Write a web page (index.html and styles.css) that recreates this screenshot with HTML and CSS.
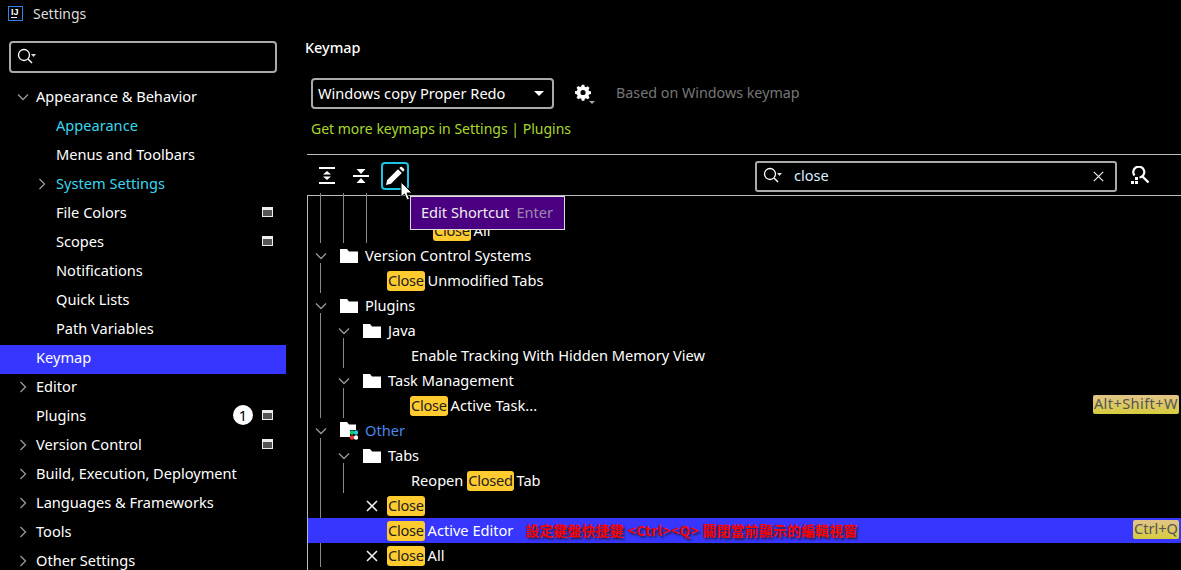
FILE: index.html
```html
<!doctype html>
<html lang="en">
<head>
    <meta charset="UTF-8">
    <title>Settings</title>
    <link rel="stylesheet" href="styles.css">
</head>
<body>
<div class="titlebar">
    <div class="app-logo"><span>IJ</span><i></i></div>
    <span class="app-name">Settings</span>
</div>
<div class="main">
    <div class="side">
        <div class="side-search">
            <svg class="search-ico" width="20" height="18" viewBox="0 0 20 18"><circle cx="7" cy="7" r="5.5" fill="none" stroke="#fff" stroke-width="1.3"/><path d="M11 11l4 4" stroke="#fff" stroke-width="1.5"/><path d="M14 6h5l-2.500 3z" fill="#ddd"/></svg>
        </div>
        <div class="nav">
            <div class="nav-item"><svg class="chev" viewBox="0 0 12 12"><path d="M1 3.500l5 5 5-5"/></svg><span>Appearance &amp; Behavior</span></div>
            <div class="nav-item sub cyan"><span>Appearance</span></div>
            <div class="nav-item sub"><span>Menus and Toolbars</span></div>
            <div class="nav-item sub cyan"><svg class="chev" viewBox="0 0 12 12"><path d="M3.500 1l5 5-5 5"/></svg><span>System Settings</span></div>
            <div class="nav-item sub"><span>File Colors</span><i class="win"></i></div>
            <div class="nav-item sub"><span>Scopes</span><i class="win"></i></div>
            <div class="nav-item sub"><span>Notifications</span></div>
            <div class="nav-item sub"><span>Quick Lists</span></div>
            <div class="nav-item sub"><span>Path Variables</span></div>
            <div class="nav-item active"><span>Keymap</span></div>
            <div class="nav-item"><svg class="chev" viewBox="0 0 12 12"><path d="M3.500 1l5 5-5 5"/></svg><span>Editor</span></div>
            <div class="nav-item"><span>Plugins</span><b class="count">1</b><i class="win"></i></div>
            <div class="nav-item"><svg class="chev" viewBox="0 0 12 12"><path d="M3.500 1l5 5-5 5"/></svg><span>Version Control</span><i class="win"></i></div>
            <div class="nav-item"><svg class="chev" viewBox="0 0 12 12"><path d="M3.500 1l5 5-5 5"/></svg><span>Build, Execution, Deployment</span></div>
            <div class="nav-item"><svg class="chev" viewBox="0 0 12 12"><path d="M3.500 1l5 5-5 5"/></svg><span>Languages &amp; Frameworks</span></div>
            <div class="nav-item"><svg class="chev" viewBox="0 0 12 12"><path d="M3.500 1l5 5-5 5"/></svg><span>Tools</span></div>
            <div class="nav-item"><svg class="chev" viewBox="0 0 12 12"><path d="M3.500 1l5 5-5 5"/></svg><span>Other Settings</span></div>
        </div>
    </div>

    <div class="content">
        <h1 class="heading">Keymap</h1>
        <div class="scheme">
            <div class="dropdown"><span class="lift">Windows copy Proper Redo</span><i class="arrow"></i></div>
            <svg class="gear" width="22" height="22" viewBox="0 0 22 22"><path fill="#fff" fill-rule="evenodd" d="M9 2h3l.5 2.300 1.500.7 2-1.300 2.100 2.100-1.300 2 .7 1.500 2.300.5v3l-2.300.5-.7 1.500 1.300 2-2.100 2.100-2-1.300-1.500.7-.5 2.300H9l-.5-2.300-1.500-.7-2 1.300-2.100-2.100 1.300-2-.7-1.500L1.200 12.500v-3l2.300-.5.7-1.500-1.300-2 2.100-2.100 2 1.300 1.500-.7zM10.500 8a3 3 0 1 0 0 6 3 3 0 0 0 0-6z" transform="scale(.86)"/><path d="M15 18h6l-3 3z" fill="#aaa"/></svg>
            <span class="based lift">Based on Windows keymap</span>
        </div>
        <div class="more">Get more keymaps in Settings | Plugins</div>

        <div class="table">
            <div class="toolbar">
                <div class="tool">
                    <svg width="18" height="18" viewBox="0 0 18 18"><path d="M1 0h16v2H1zM1 15h16v2H1z" fill="#fff"/><path d="M9 4l4 3.500H5zM9 13l4-3.500H5z" fill="#fff"/></svg>
                </div>
                <div class="tool">
                    <svg width="18" height="18" viewBox="0 0 18 18"><path d="M1 8h16v2H1z" fill="#fff"/><path d="M9 7L4.500 2h9zM9 11l4.500 5h-9z" fill="#fff"/></svg>
                </div>
                <div class="tool focused">
                    <svg width="20" height="20" viewBox="0 0 20 20"><path d="M1 19l1.200-5L13 3.200 16.800 7 6 17.800zM14.300 2l1.200-1.100a1 1 0 0 1 1.400 0l2.200 2.200a1 1 0 0 1 0 1.400L18 5.700z" fill="#fff"/></svg>
                </div>
                <div class="filter">
                    <svg class="search-ico" width="20" height="18" viewBox="0 0 20 18"><circle cx="7" cy="7" r="5.500" fill="none" stroke="#fff" stroke-width="1.300"/><path d="M11 11l4 4" stroke="#fff" stroke-width="1.500"/><path d="M14 6h5l-2.500 3z" fill="#ddd"/></svg>
                    <span class="filter-text lift">close</span>
                    <svg class="clear" width="11" height="11" viewBox="0 0 11 11"><path d="M.8.800l9.400 9.400M10.200.800L.8 10.200" stroke="#eee" stroke-width="1.200"/></svg>
                </div>
                <div class="tool find">
                    <svg width="20" height="20" viewBox="0 0 20 20"><path d="M4.500 9.500a5.500 5.500 0 1 1 5 2" fill="none" stroke="#fff" stroke-width="2.200"/><path d="M12.500 10.500l6 6" stroke="#fff" stroke-width="2.400"/><path d="M5 11h3v3H5zM1 15h3v3H1zM5 15h3v3H5z" fill="#fff"/></svg>
                </div>
            </div>
            <div class="tree">
                <div class="tree-list">
                    <div class="row"><i class="guide g1"></i><i class="guide g2"></i><i class="guide g3"></i></div>
                    <div class="row lv3"><i class="guide g1"></i><i class="guide g2"></i><i class="guide g3"></i><mark>Close</mark> All</div>
                    <div class="row lv0"><i class="guide g1 from"></i><svg class="chev" viewBox="0 0 12 12"><path d="M1 3.500l5 5 5-5"/></svg><svg class="folder" viewBox="0 0 18 14"><path d="M0 0h7l2 2.500h9V14H0z"/></svg>Version Control Systems</div>
                    <div class="row lv1"><i class="guide g1"></i><mark>Close</mark> Unmodified Tabs</div>
                    <div class="row lv0"><i class="guide g1 from"></i><svg class="chev" viewBox="0 0 12 12"><path d="M1 3.500l5 5 5-5"/></svg><svg class="folder" viewBox="0 0 18 14"><path d="M0 0h7l2 2.500h9V14H0z"/></svg>Plugins</div>
                    <div class="row lv2"><i class="guide g1"></i><i class="guide g2 from"></i><svg class="chev" viewBox="0 0 12 12"><path d="M1 3.500l5 5 5-5"/></svg><svg class="folder" viewBox="0 0 18 14"><path d="M0 0h7l2 2.500h9V14H0z"/></svg>Java</div>
                    <div class="row lv4"><i class="guide g1"></i><i class="guide g2"></i>Enable Tracking With Hidden Memory View</div>
                    <div class="row lv2"><i class="guide g1"></i><i class="guide g2 from"></i><svg class="chev" viewBox="0 0 12 12"><path d="M1 3.500l5 5 5-5"/></svg><svg class="folder" viewBox="0 0 18 14"><path d="M0 0h7l2 2.500h9V14H0z"/></svg>Task Management</div>
                    <div class="row lv4 tight"><i class="guide g1"></i><i class="guide g2"></i><mark>Close</mark> Active Task...<span class="keys">Alt+Shift+W</span></div>
                    <div class="row lv0"><i class="guide g1 from"></i><svg class="chev" viewBox="0 0 12 12"><path d="M1 3.500l5 5 5-5"/></svg>
                        <svg class="folder other" viewBox="0 0 18 18"><path d="M0 0h7l2 2.500h7V8h-6v7H0z"/><circle cx="12" cy="10.500" r="2.200" fill="#1c6"/><circle cx="16" cy="10.500" r="2.200" fill="#2cd"/><circle cx="12" cy="15.500" r="2.200" fill="#e33"/><circle cx="16" cy="15.500" r="2.200" fill="#fff"/></svg><span class="blue">Other</span></div>
                    <div class="row lv2"><i class="guide g1"></i><i class="guide g2 from"></i><svg class="chev" viewBox="0 0 12 12"><path d="M1 3.500l5 5 5-5"/></svg><svg class="folder" viewBox="0 0 18 14"><path d="M0 0h7l2 2.500h9V14H0z"/></svg>Tabs</div>
                    <div class="row lv4"><i class="guide g1"></i><i class="guide g2"></i>Reopen&nbsp;<mark>Closed</mark>&nbsp;Tab</div>
                    <div class="row lvx"><i class="guide g1"></i><svg class="x" viewBox="0 0 12 12"><path d="M1 1l10 10M11 1L1 11"/></svg><mark>Close</mark></div>
                    <div class="row lv1 selected"><mark>Close</mark> Active Editor<span class="note">設定鍵盤快捷鍵 &lt;Ctrl&gt;&lt;Q&gt; 關閉當前顯示的編輯視窗</span><span class="keys short">Ctrl+Q</span></div>
                    <div class="row lvx"><i class="guide g1"></i><svg class="x" viewBox="0 0 12 12"><path d="M1 1l10 10M11 1L1 11"/></svg><mark>Close</mark> All</div>
                </div>
                <div class="tooltip">Edit Shortcut<span class="tip-key">Enter</span></div>
            </div>
            <svg class="cursor" width="14" height="20" viewBox="0 0 14 20"><path d="M1 1v15l3.500-3 2.500 6 2.500-1-2.500-6H12z" fill="#fff" stroke="#000"/></svg>
        </div>
    </div>
</div>
</body>
</html>
```

FILE: styles.css
```css
html, body{
    height: 100%;
    overflow: hidden;
}
body{
    margin: 0;
    background: #000;
    color: #fff;
    font-family: "Noto Sans", sans-serif;
    font-size: 14.6px;
    display: flex;
    flex-direction: column;
}
.titlebar{
    height: 28px;
    box-sizing: border-box;
    padding: 0 0 2px 8px;
    display: flex;
    align-items: center;
    flex: none;
}
.app-logo{
    width: 15px;
    height: 15px;
    box-sizing: border-box;
    border: 1px solid #2b86e6;
    position: relative;
    font-size: 9px;
    font-weight: 700;
    line-height: 8px;
    padding: 1px 0 0 2px;
    font-family: "Liberation Sans", sans-serif;
}
.app-logo i{
    display: block;
    width: 6px;
    height: 1px;
    background: #fff;
    margin-top: 1px;
}
.app-name{
    margin-left: 10px;
    color: #ddd;
    font-size: 14px;
}
.main{
    flex: 1;
    display: flex;
    min-height: 0;
}
.lift{
    margin-bottom: 2px;
}

/* left column */
.side{
    width: 286px;
    flex: none;
    padding-top: 13px;
}
.side-search{
    width: 268px;
    height: 32px;
    margin-left: 9px;
    box-sizing: border-box;
    border: 2px solid #aaa;
    border-radius: 4px;
    display: flex;
    align-items: center;
    padding-left: 6px;
}
.nav{
    margin-top: 11px;
}
.nav-item{
    height: 29px;
    box-sizing: border-box;
    display: flex;
    align-items: center;
    padding: 0 13px 6px 36px;
    position: relative;
}
.nav-item.sub{
    padding-left: 56px;
}
.nav-item.cyan{
    color: #3ad6ee;
}
.nav-item.active{
    background: #3636ff;
}
.nav-item .chev{
    position: absolute;
    left: 17px;
    top: 7px;
}
.nav-item.sub .chev{
    left: 36px;
}
.chev{
    width: 12px;
    height: 12px;
    flex: none;
    fill: none;
    stroke: #999;
    stroke-width: 1.300;
}
.win{
    width: 11px;
    height: 10px;
    box-sizing: border-box;
    border: 1px solid #eee;
    border-top-width: 3px;
    background: #555;
    margin-left: auto;
}
.count{
    margin-left: auto;
    width: 20px;
    height: 20px;
    border-radius: 50%;
    background: #fff;
    color: #000;
    font-weight: 400;
    text-align: center;
    line-height: 20px;
}
.count + .win{
    margin-left: 9px;
}

/* right column */
.content{
    flex: 1;
    min-width: 0;
    padding-left: 19px;
    display: flex;
    flex-direction: column;
}
.heading{
    margin: 9px 0 0;
    font-size: 14.400px;
    font-weight: 500;
    line-height: 22px;
}
.scheme{
    display: flex;
    align-items: center;
    margin: 19px 0 0 6px;
}
.dropdown{
    width: 243px;
    height: 31px;
    box-sizing: border-box;
    border: 2px solid #aaa;
    border-radius: 4px;
    display: flex;
    align-items: center;
    justify-content: space-between;
    padding: 0 8px 0 5px;
}
.arrow{
    width: 0;
    height: 0;
    border-left: 5px solid transparent;
    border-right: 5px solid transparent;
    border-top: 5px solid #fff;
}
.gear{
    margin-left: 20px;
}
.based{
    margin-left: 20px;
    color: #777;
    font-size: 14.300px;
}
.more{
    margin: 10px 0 0 6px;
    line-height: 20px;
    font-size: 14px;
    color: #a8d82a;
}
.table{
    margin: 15px 0 0 2px;
    flex: 1;
    min-height: 0;
    border-top: 1px solid #bbb;
    display: flex;
    flex-direction: column;
    position: relative;
}
.toolbar{
    flex: none;
    display: flex;
    align-items: center;
    gap: 6px;
    padding: 2px 0 0 6px;
    border-bottom: 1px solid #bbb;
    box-sizing: border-box;
    height: 41px;
}
.tool{
    width: 28px;
    height: 28px;
    box-sizing: border-box;
    display: flex;
    align-items: center;
    justify-content: center;
}
.tool.focused{
    border: 2px solid #1cc3e4;
    border-radius: 4px;
}
.filter{
    margin-left: auto;
    width: 362px;
    height: 31px;
    box-sizing: border-box;
    border: 2px solid #aaa;
    border-radius: 3px;
    display: flex;
    align-items: center;
    padding: 0 11px 0 6px;
}
.filter-text{
    margin-left: 11px;
    color: #ddeeff;
}
.clear{
    margin-left: auto;
}
.find{
    margin: 0 27px 0 3px;
}
.tree{
    flex: 1;
    min-height: 0;
    border-left: 1px solid #bbb;
    position: relative;
}
.tree-list{
    margin-top: -3px;
    overflow: hidden;
    height: 100%;
}
.row{
    height: 25px;
    box-sizing: border-box;
    padding-bottom: 2px;
    display: flex;
    align-items: center;
    white-space: pre;
    position: relative;
}
.guide{
    position: absolute;
    top: 0;
    bottom: 0;
    width: 1px;
    background: #888;
}
.guide.from{
    top: 20px;
}
.g1{ left: 12px; }
.g2{ left: 35px; }
.g3{ left: 58px; }
.lv0{ padding-left: 7px; }
.lv1{ padding-left: 79px; }
.lv2{ padding-left: 30px; }
.lv3{ padding-left: 125px; }
.lv4{ padding-left: 103px; }
.lv4.tight{ padding-left: 102px; }
.lvx{ padding-left: 58px; }
.row .chev{
    margin: 2px 13px 0 0;
}
.folder{
    width: 18px;
    height: 14px;
    margin: 2px 7px 0 0;
    fill: #fff;
    flex: none;
}
.folder.other{
    height: 18px;
}
.blue{
    color: #4a86e8;
}
.x{
    width: 12px;
    height: 12px;
    margin: 2px 9px 0 0;
    fill: none;
    stroke: #eee;
    stroke-width: 1.600;
}
mark{
    background: #ffcb2e;
    color: #222;
    border-radius: 3px;
    padding: 0 1px;
    height: 20px;
    margin: 3px -1px 0 0;
    line-height: 18px;
    letter-spacing: -.25px;
}
.keys{
    position: absolute;
    right: 2px;
    top: 2px;
    height: 19px;
    line-height: 17px;
    padding: 0 1px;
    border-radius: 2px;
    background: linear-gradient(#e2c488, #d6cc3e);
    color: #555;
    letter-spacing: .4px;
}
.keys.short{
    letter-spacing: 0;
}
.selected{
    background: #3636ff;
}
.note{
    margin-left: 12px;
    font-family: "Noto Sans CJK TC", sans-serif;
    font-size: 13.600px;
    letter-spacing: .5px;
    font-weight: 700;
    color: #f00;
    text-shadow: 2px 2px 2px #224;
}
.tooltip{
    position: absolute;
    left: 102px;
    top: 0;
    width: 155px;
    height: 34px;
    box-sizing: border-box;
    padding: 0 0 2px 10px;
    background: #4b0082;
    border: 1px solid #ddd;
    display: flex;
    align-items: center;
    color: #eee;
}
.tip-key{
    margin-left: 7px;
    color: #9c8aac;
}
.cursor{
    position: absolute;
    left: 93px;
    top: 26px;
}
```
